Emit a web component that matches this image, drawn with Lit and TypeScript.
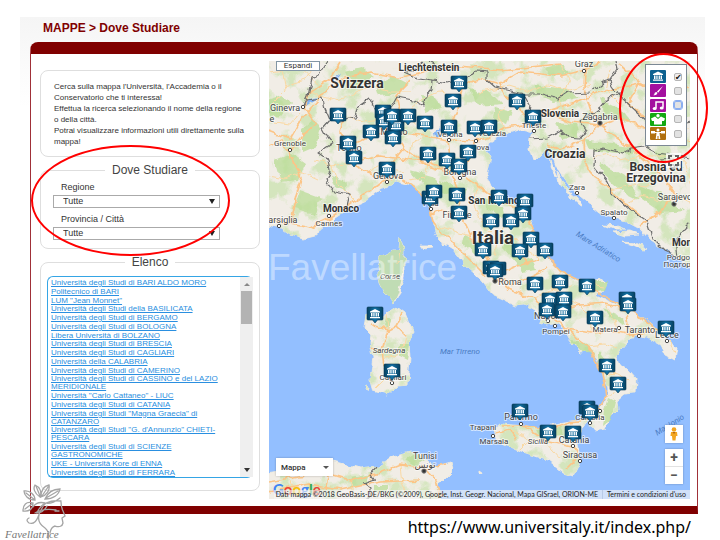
import { LitElement, html, svg, css } from "lit";
import { customElement } from "lit/decorators.js";

type Label = [text: string, x: number, y: number, cls: string];

const LAND = [
  // mainland
  "M260 50H700V272L690 267 678 258 665 250 650 240 640 229 625 221 612 216 600 213 586 201 575 192 565 180 556 166 552 155 548 146 543 150 538 158 534 162 530 150 531 140 533 132 520 129 508 133 498 135 489 141 487 150 491 158 489 166 487 176 491 186 498 193 507 200 520 207 528 213 532 222 534 232 538 245 545 256 553 264 562 271 570 277 580 281 590 281 602 279 607 283 603 291 597 296 606 300 618 305 632 311 645 322 658 332 668 340 677 348 675 360 665 355 660 345 646 337 634 335 625 346 617 356 620 365 629 370 636 378 635 393 625 394 617 401 618 410 610 418 604 429 594 431 590 425 597 415 606 400 608 390 603 378 601 370 597 358 590 352 580 353 573 345 568 338 562 327 555 324 546 325 540 318 535 311 525 305 515 306 503 300 492 295 483 283 476 275 465 265 453 250 442 243 437 238 434 226 432 215 428 202 422 193 410 185 395 181 380 190 368 200 350 208 335 218 325 228 315 236 303 239 290 235 280 228 260 223Z",
  // Corse
  "M400 238L403 243 405 263 405 277 400 292 394 301 385 293 380 283 377 267 380 257 393 250 399 250Z",
  // Sardegna
  "M397 307L405 313 413 332 409 343 410 357 408 384 398 385 387 395 373 391 370 380 373 357 370 343 371 334 364 327 366 315 377 320Z",
  // Sicilia
  "M493 431L502 423 513 424 523 425 538 428 563 422 580 420 590 418 585 427 575 438 577 450 581 460 573 476 563 473 547 460 523 452 507 445 495 440Z",
  // Tunisia
  "M260 474L285 470 333 462 360 469 377 467 393 457 410 452 427 457 433 467 451 462 453 470 440 483 437 490 442 510H260Z",
  // small islands and the Dalmatian archipelago
  "M421 246l10 0 1 3-8 1zM551 160l3 9 4 8-3-1-5-10zM558 172l6 11 7 9-3 0-8-10zM569 192l7 6 6 7-4-1-8-7zM603 225l14 1 8 3-12 0zM613 232l16-1 10 4-14 1zM622 242l14 1 12 6-4 1-12-5zM540 320l3 1-1 3-3-1zM366 385l2 1-1 3-2-1zM479 471l3 2-1 2-2-2z",
].join("");

const GREENS =
  "M269 100l14-6 8 10-10 12-12 2zM302 130l12-10 8 8-6 18-14 6zM275 160l16-6 14 10-6 16-18 2zM300 190l22 8-8 16-20-6zM330 175l14 4 2 12-12-4zM345 72l16-4 14 10-18 8zM375 84l18-8 16 8-14 10-16 2zM420 95l14 2 8 10-16 6zM470 88l22 6 10 10-24 2zM495 108l16 4-4 12-14-6zM535 84l30 4 14 10-24 4-18-8zM545 68l16-4 10 8-16 6zM600 98l20 10 14 16-28-6zM556 122l20 2 4 14-18 2zM585 140l26 4 26 4-8 6-40-4zM600 162l24 14 16 24-20-10-18-16zM640 185l24 10 20 16-22 2-20-14zM655 150l18 6 10 12-22-6zM410 170l22 6 12 12-20-2zM440 180l26 10-4 10-20-8zM478 195l24 12 4 16-18-14zM465 235l16 8-4 12-14-10zM505 240l16 16 12 12-14-2-16-18zM518 262l14-4 4 12-14 2zM596 281l12 0-3 9-10 1zM604 309l18 8 4 9-16-8zM570 340l16 2 8 12-14-2zM598 350l10 12-2 14-8-14zM608 398l8 4-4 16-10 8 2-16zM400 344l9 0-2 16-8-4zM386 318l6 2-4 9-4-2zM536 430l24-4 4 8-24 2zM352 477l18-4-4 12-16 2zM374 486l12 0 0 6-12 0zM406 460l10-6 10 6-10 6z";

const ROADS = [
  "M269 131L290 139 302 118 325 92 345 77 370 72 400 78 430 70 460 66 500 70 560 64",
  "M348 146L340 132 344 116M348 146L372 134 393 131 425 136 450 140 476 141 486 139M348 146L352 163 368 172 386 179",
  "M354 163L380 156 408 160 430 163 452 172 466 178 486 192 504 203 524 209 533 228 542 250 560 270 588 284 605 297 632 311 656 330",
  "M393 131L404 148 428 166 452 174 459 193 460 214 470 236 486 258 494 276 510 290 535 298 548 314 566 329 588 346 602 372 606 396 597 412",
  "M386 181L400 177 415 188 428 203 434 224 450 240 468 258 486 276",
  "M386 179L368 192 348 206 328 219 310 228 290 224 269 219M290 224L296 196 302 178 290 156 282 140 269 146",
  "M340 62L330 78 310 92 304 108 316 124 302 136 290 150M393 131L400 112 396 96 410 80",
  "M449 130L457 110 462 88 478 78 500 84M449 140L452 172M476 141L468 160 460 172",
  "M486 139L505 128 530 124 545 112 575 102 600 92 640 84 660 80M530 124L520 108 505 96 500 84 520 72 560 76 585 70 600 62",
  "M545 112L570 122 600 125 620 118 650 130 690 140M600 125L584 140 560 150 548 144M600 125L590 108 584 88 585 70",
  "M584 140L585 160 592 176 612 190 626 204 640 216M600 125L618 138 640 156 662 176 676 196 660 212 640 226",
  "M620 64L640 82 655 92 690 86M640 82L628 104 650 120",
  "M494 276L518 266 540 258M494 276L512 284 532 276 548 268M550 312L580 306 605 304 632 311M566 329L590 333 616 332 632 335 656 330",
  "M626 314L630 336M534 232L520 252 528 264M460 214L440 210 432 214M404 148L387 168",
  "M502 426L520 425 545 429 570 422 588 420M573 446L578 458 568 468M523 426L545 440 573 446M494 434L510 430 516 440",
  "M370 324L388 330 396 326 402 314M388 330L382 350 384 366 392 382M382 352L372 348M396 326L406 336",
  "M269 482L300 476 330 474 350 480 380 472 400 464 425 468 436 480 440 499M269 492L310 484 340 490 380 482 420 480M425 468L446 464M330 474L326 490",
];

const MINOR = [
  "M269 72L300 68 318 84M280 61L286 90 272 104M318 62L305 80 284 86M269 175L285 178 300 172 318 180M310 92L330 100 350 96 368 86 390 92 412 92",
  "M300 112L290 124 274 122M316 160L332 166 352 163M332 166L338 184 354 200M368 172L380 166 404 172M408 160L412 144 425 136",
  "M344 116L362 122 384 120M414 124L412 108 424 98 440 92 457 96M430 163L434 150M428 166L424 178 410 180M470 236L456 232 440 226",
  "M480 92L510 86 530 92 548 84 570 90 590 84M505 128L498 116 506 104M560 64L570 80 560 98 566 120M610 70L606 90 620 104",
  "M620 118L640 128 664 132 690 128M640 156L620 160 606 154 592 158M662 176L648 186 632 184 612 190M676 196L690 202M640 156L664 156 684 162 690 182M626 204L640 196 660 200",
  "M466 178L478 188 474 206 484 226 498 238 520 240M524 209L510 222 498 238 494 256M540 258L526 250 512 244M535 298L552 290 572 286M560 270L552 288 566 300 580 306M588 284L604 286",
  "M580 306L592 318 590 333M605 304L614 320 616 332M588 346L604 344 616 348M602 372L618 374 632 382M606 396L616 392",
  "M632 335L648 330M656 330L670 342 674 354M656 330L648 320 636 314M510 430L530 440 548 444 560 458M530 440L520 450M545 429L550 440",
  "M386 314L388 330M406 336L402 352 384 358M384 366L400 364M376 388L384 380M400 250L398 264",
  "M290 480L296 499M350 480L356 499M400 464L402 484 410 499M372 474L368 490M310 484L316 499",
];

const BORDERS = [
  "M328 61L320 74 312 78 308 96 303 107 306 100 323 98 325 108 330 120 323 128 328 137 333 143 318 153 328 160 330 170 326 180 335 192 349 195 346 208",
  "M330 120L340 121 355 118 360 105 370 98 377 113 388 113 397 97 413 100 423 106 425 98 432 90 433 80 447 83 467 78 477 71 487 72 487 80 495 87 523 94 540 94 558 99 567 93 590 92 603 82 610 80 617 70 615 61",
  "M424 61L417 68 405 72 418 78 433 80M428 61L436 66 430 72",
  "M610 80L612 86 618 94 607 100 600 108 592 114 580 122 586 130 580 139 568 138 560 131 547 138 530 139M524 95L530 106 528 116 536 126",
  "M618 94L637 112 648 122 672 126 690 122M690 158L680 156 657 153 645 147 630 149 623 153 603 148 595 150 594 166 607 182 613 194 630 210 647 222 652 238 667 253 677 257 675 240 683 230 690 223M661 160L684 158",
  "M377 466L370 474 374 480 363 484 370 490 369 499M432 490l-2 9",
];

const TOWNS: [number, number][] = [
  [303, 107], [290, 150], [387, 182], [449, 140], [476, 141], [460, 178], [431, 209], [329, 216], [279, 226],
  [584, 71], [577, 193], [614, 218], [548, 321], [555, 326], [619, 328], [639, 336], [667, 341],
  [493, 436], [521, 424], [590, 423], [573, 446], [580, 461], [392, 383], [534, 131], [600, 411],
];
const CAPITALS: [number, number][] = [[600, 123], [674, 204], [495, 281], [424, 471]];

const PINS: [number, number][] = [
  [459, 83], [453, 101], [338, 115], [383, 112], [384, 121], [396, 125], [392, 116], [408, 116], [393, 138],
  [371, 132], [425, 123], [449, 127], [475, 128], [489, 127], [348, 143], [354, 158], [428, 154], [447, 160],
  [459, 166], [468, 152], [387, 169], [430, 198], [434, 192], [457, 195], [459, 213], [517, 101], [533, 117],
  [499, 197], [525, 201], [523, 214], [491, 221], [511, 221], [531, 239], [520, 251], [545, 250], [483, 250],
  [491, 268], [498, 269], [495, 271], [535, 284], [560, 282], [587, 286], [550, 300], [564, 299], [547, 310],
  [563, 312], [595, 318], [627, 299], [628, 305], [666, 328], [607, 366], [618, 384], [520, 411], [587, 408],
  [590, 412], [548, 432], [573, 433], [375, 314], [392, 371],
];

const LABELS: Label[] = [
  ["Svizzera", 357, 88, "country"], ["Liechtenstein", 429, 71, "small-b"], ["Graz", 584, 67, "city"],
  ["Ginevra", 285, 111, "city"], ["e", 272, 122, "city"], ["Grenoble", 290, 146, "town"],
  ["Torino", 349, 151, "city"], ["Milano", 394, 135, "city"], ["Verona", 450, 137, "town"],
  ["Venezia", 492, 136, "town"], ["Padova", 476, 150, "town"], ["Trieste", 534, 128, "town"],
  ["Slovenia", 560, 117, "small-b"], ["Zagabria", 600, 120, "city"], ["Croazia", 565, 158, "mid"],
  ["Bosnia ed", 656, 171, "mid"], ["Erzegovina", 656, 182, "mid"], ["Sarajevo", 675, 200, "city"],
  ["Genova", 388, 179, "city"], ["Bologna", 460, 175, "city"], ["Monaco", 341, 212, "small-b"],
  ["Marsiglia", 279, 223, "city"], ["Cannes", 329, 226, "town"], ["Pisa", 431, 206, "town"],
  ["Firenze", 457, 218, "city"], ["San Marino", 494, 204, "small-b"], ["Zara", 577, 190, "town"],
  ["Spalato", 614, 215, "town"], ["Italia", 493, 244, "big"], ["Roma", 510, 285, "city"],
  ["Mon", 682, 246, "small-b"], ["Podgorica", 685, 260, "town"], ["Подгорица", 684, 267, "town"],
  ["Napoli", 547, 319, "city"], ["Pompei", 556, 334, "town"], ["Matera", 605, 332, "town"],
  ["Taranto", 640, 333, "city"], ["Lecce", 667, 338, "city"], ["Corse", 390, 279, "isle"],
  ["Sardegna", 389, 353, "isle"], ["Cagliari", 393, 380, "town"], ["Mar Tirreno", 460, 354, "water"],
  ["Tunisi", 425, 459, "city"], ["تونس", 425, 468, "arabic"], ["Trapani", 483, 430, "town"],
  ["Marsala", 494, 444, "town"], ["Palermo", 521, 420, "city"], ["Sicilia", 538, 444, "isle"],
  ["Catania", 574, 443, "city"], ["Calabria", 590, 420, "town"], ["Siracusa", 580, 458, "city"],
];

const temple = svg`<path d="M-5 -2.4L0 -5 5 -2.4V-1.6H-5zM-4 -1h1.5v3.6h-1.5zM-1.7 -1h1.3v3.6h-1.3zM.6 -1h1.3v3.6h-1.3zM2.6 -1h1.4v3.6h-1.4zM-5 3h10v1.2h-10z" fill="#fff"/>`;

@customElement("study-map")
export class StudyMap extends LitElement {
  static styles = css`
    :host { display: block; position: relative; aspect-ratio: 421 / 438; overflow: hidden; background: #93bfff; font-family: Roboto, "Noto Sans", sans-serif; color: #333; }
    .canvas { display: block; width: 100%; height: 100%; }
    button { font: inherit; color: inherit; padding: 0; margin: 0; border: 0; background: #fff; }
    text { text-anchor: middle; paint-order: stroke; stroke: #fff; stroke-opacity: .6; stroke-width: 2px; stroke-linejoin: round; fill: #444; font-size: 9px; }
    text.town { font-size: 8px; }
    text.arabic { font: 9px "DejaVu Sans", sans-serif; }
    text.country { font-size: 14px; font-weight: 700; fill: #333; }
    text.mid { font-size: 12px; font-weight: 700; fill: #333; }
    text.small-b { font-size: 10px; font-weight: 700; fill: #333; }
    text.big { font-size: 19px; font-weight: 700; fill: #333; }
    text.isle { font-size: 8px; font-style: italic; }
    text.water { font-size: 8px; font-style: italic; fill: #4a7cc4; stroke: none; }
    text.mark { font-family: "Liberation Sans", Arial, sans-serif; font-size: 37px; fill: #fff; fill-opacity: .42; stroke: none; text-anchor: start; }
    .expand { position: absolute; left: 7px; top: 0; width: 44px; height: 10px; border: 1px solid #8296a5; font-size: 8px; line-height: 8px; }
    .legend { position: absolute; right: 3px; top: 3px; width: 42px; height: 82px; box-sizing: border-box; border: 1px solid #7c8894; background: #fff; padding: 5px 4px; display: flex; flex-direction: column; justify-content: space-between; }
    .legend label { display: flex; justify-content: space-between; align-items: center; }
    .legend svg { width: 16px; height: 13px; display: block; }
    input { appearance: none; margin: 0; width: 8px; height: 8px; border: 1px solid #b5b5b5; border-radius: 2px; background: #e2e2e2; display: grid; place-items: center; }
    input:checked { background: #eee; }
    input:checked::before { content: "✔"; font: 8px/8px "DejaVu Sans", sans-serif; color: #111; }
    input.focused { outline: 1px solid #8aaef0; border-color: #8aaef0; }
    .full { position: absolute; right: 9px; top: 92px; width: 15px; height: 15px; background: #ffffffc0; }
    .full svg { display: block; }
    .type { position: absolute; left: 7px; bottom: 23px; width: 57px; height: 18px; display: flex; align-items: center; justify-content: space-between; padding: 0 4px 0 5px; box-sizing: border-box; font-size: 8px; font-weight: 500; box-shadow: 0 0 2px #0004; }
    .type i { border: 3px solid transparent; border-top-color: #555; border-bottom: 0; }
    .side { position: absolute; right: 7px; bottom: 15px; width: 18px; display: flex; flex-direction: column; gap: 6px; }
    .side button, .zoom { box-shadow: 0 0 2px #0004; }
    .peg { height: 18px; display: grid; place-items: center; }
    .zoom { background: #fff; display: flex; flex-direction: column; }
    .zoom button { box-shadow: none; height: 17px; font-size: 14px; line-height: 17px; font-weight: 700; color: #555; }
    .zoom button + button { border-top: 1px solid #e2e2e2; height: 18px; }
    .brand { position: absolute; left: 4px; bottom: 2px; font: 700 15px/15px Lato, sans-serif; }
    .credits { position: absolute; right: 0; bottom: 0; height: 9px; display: flex; background: #f5f5f5a0; font: 7px/9px Lato, sans-serif; white-space: nowrap; color: #222; }
    .credits span { padding: 0 4px 0 2px; }
    .credits a { color: inherit; text-decoration: none; padding: 0 4px; border-left: 1px solid #b8cbe6; }
    .b { color: #4285f4; } .r { color: #ea4335; } .y { color: #fbbc05; } .g { color: #34a853; }
  `;

  render() {
    return html`
      <svg class="canvas" viewBox="269 61 421 438" preserveAspectRatio="xMidYMid slice" role="img" aria-label="Italia">
        <defs>
          <filter id="rough" x="0" y="0" width="1" height="1" color-interpolation-filters="sRGB">
            <feTurbulence type="fractalNoise" baseFrequency=".11" numOctaves="2" seed="4" result="n" />
            <feDisplacementMap in="SourceGraphic" in2="n" scale="7" xChannelSelector="R" yChannelSelector="G" />
          </filter>
          <filter id="relief" x="0" y="0" width="1" height="1" color-interpolation-filters="sRGB">
            <feTurbulence type="fractalNoise" baseFrequency=".05" numOctaves="4" seed="9" />
            <feColorMatrix values="0 0 0 0 .76  0 0 0 0 .88  0 0 0 0 .64  6 0 0 0 -3" />
            <feComposite in2="SourceGraphic" operator="in" />
          </filter>
          <linearGradient id="pinfill" x1="0" x2="1">
            <stop offset="0" stop-color="#07405f" /><stop offset=".5" stop-color="#1272a6" /><stop offset="1" stop-color="#07405f" />
          </linearGradient>
          <g id="pin">
            <path d="M-7 -7H7Q8 -7 8 -6V5Q8 6 7 6H2.500L0 9-2.500 6H-7Q-8 6-8 5V-6Q-8 -7-7 -7Z" fill="url(#pinfill)" stroke="#063b58" stroke-width=".6" />
            ${temple}
          </g>
        </defs>
        <g filter="url(#rough)">
          <rect x="250" y="40" width="460" height="480" fill="#93bfff" />
          <path d=${LAND} fill="#f1ede6" stroke="#f6edda" stroke-width=".8" />
          <path d=${LAND} filter="url(#relief)" opacity=".6" />
          <path d=${GREENS} fill="#b9dc97" opacity=".75" />
          <path d="M400 238L403 243 405 263 402 277 398 292 394 301 385 293 380 283 377 267 380 257 393 250 399 250Z" fill="#c0dcb4" />
          <path d="M304 103q8-7 18-5-9 1-16 7zM435 133l3-7 1 8-2 6zM333 78l8-5-5 7z" fill="#7fb1f5" />
          ${MINOR.map((d) => svg`<path d=${d} fill="none" stroke="#fad9a4" stroke-width="1"/>`)}
          ${ROADS.map((d) => svg`<path d=${d} fill="none" stroke="#fcc587" stroke-width="1.700" stroke-linejoin="round"/>`)}
          ${BORDERS.map((d) => svg`<path d=${d} fill="none" stroke="#6d6d6d" stroke-width="1.200" stroke-linejoin="round"/>`)}
        </g>
        ${TOWNS.map(([x, y]) => svg`<circle cx=${x} cy=${y} r="1.700" fill="#fff" stroke="#444" stroke-width="1"/>`)}
        ${CAPITALS.map(([x, y]) => svg`<circle cx=${x} cy=${y} r="2.200" fill="#333" stroke="#777" stroke-width="1"/>`)}
        ${LABELS.map(([t, x, y, c]) => svg`<text class=${c} x=${x} y=${y}>${t}</text>`)}
        <text class="water" transform="translate(597 249) rotate(32)">Mare Adriatico</text>
        <text class="water" transform="translate(671 427) rotate(-32)">Mar Ionio</text>
        ${PINS.map(([x, y]) => svg`<use href="#pin" x=${x} y=${y}/>`)}
        <text class="mark" x="268" y="280">Favellatrice</text>
      </svg>
      <button class="expand">Espandi</button>
      <button class="full" aria-label="Schermo intero">
        <svg width="15" height="15" viewBox="0 0 15 15" fill="none" stroke="#666" stroke-width="2"><path d="M3 6V3h3M9 3h3v3M12 9v3H9M6 12H3V9" /></svg>
      </button>
      <div class="legend">
        <label>
          <svg viewBox="-8 -6.500 16 13"><rect x="-8" y="-6.500" width="16" height="13" rx="1" fill="#0d6190" />${temple}</svg>
          <input type="checkbox" aria-label="Università" checked />
        </label>
        <label>
          <svg viewBox="0 0 16 13"><rect width="16" height="13" rx="1" fill="#a3109f" /><path d="M13 2L7 7.500 8.200 8.700zM6.500 8q-2 0-2 1.500T3 11q3.500 1 4.500-2z" fill="#fff" /></svg>
          <input type="checkbox" aria-label="Accademia" />
        </label>
        <label>
          <svg viewBox="0 0 16 13"><rect width="16" height="13" rx="1" fill="#a3109f" /><path d="M6 9V3h7v5.500" fill="none" stroke="#fff" stroke-width="1.500" /><ellipse cx="4.700" cy="9.500" rx="2" ry="1.500" fill="#fff" /><ellipse cx="11.700" cy="9" rx="2" ry="1.500" fill="#fff" /></svg>
          <input class="focused" type="checkbox" aria-label="Conservatorio" />
        </label>
        <label>
          <svg viewBox="0 0 16 13"><rect width="16" height="13" rx="1" fill="#12a812" /><circle cx="8" cy="2.800" r="1.700" fill="#fff" /><path d="M1 5.500L5 3.500 8 6 11 3.500l4 2-1 2.500H12V11.500H4V8H2z" fill="#fff" /></svg>
          <input type="checkbox" aria-label="Studenti" />
        </label>
        <label>
          <svg viewBox="0 0 16 13"><rect width="16" height="13" rx="1" fill="#b1700f" /><circle cx="8" cy="3" r="1.500" fill="#fff" /><path d="M1 4h4v2.500H1zM11 4h4v2.500h-4zM5 5h6v1H5zM6.500 6h3l.8 6H8.500V9h-1v3H5.700z" fill="#fff" /></svg>
          <input type="checkbox" aria-label="Servizi" />
        </label>
      </div>
      <button class="type">Mappa<i></i></button>
      <div class="side">
        <button class="peg" aria-label="Street View">
          <svg width="8" height="14" viewBox="0 0 8 14"><circle cx="4" cy="2.500" r="2.300" fill="#f3a621" /><path d="M1 5h6l.5 4H6l-.5 4.500h-3L2 9H.5z" fill="#f3a621" /><path d="M2.500 5h3L4 7z" fill="#b5650d" /></svg>
        </button>
        <div class="zoom"><button aria-label="Zoom avanti">+</button><button aria-label="Zoom indietro">−</button></div>
      </div>
      <div class="brand" aria-label="Google"><span class="b">G</span><span class="r">o</span><span class="y">o</span><span class="b">g</span><span class="g">l</span><span class="r">e</span></div>
      <div class="credits"><span>Dati mappa ©2018 GeoBasis-DE/BKG (©2009), Google, Inst. Geogr. Nacional, Mapa GISrael, ORION-ME</span><a href="#">Termini e condizioni d'uso</a></div>
    `;
  }
}

const UNIVERSITIES = [
  "Università degli Studi di BARI ALDO MORO", "Politecnico di BARI", 'LUM "Jean Monnet"',
  "Università degli Studi della BASILICATA", "Università degli Studi di BERGAMO", "Università degli Studi di BOLOGNA",
  "Libera Università di BOLZANO", "Università degli Studi di BRESCIA", "Università degli Studi di CAGLIARI",
  "Università della CALABRIA", "Università degli Studi di CAMERINO", "Università degli Studi di CASSINO e del LAZIO MERIDIONALE",
  'Università "Carlo Cattaneo" - LIUC', "Università degli Studi di CATANIA", 'Università degli Studi "Magna Graecia" di CATANZARO',
  "Università degli Studi \"G. d'Annunzio\" CHIETI-PESCARA", "Università degli Studi di SCIENZE GASTRONOMICHE",
  "UKE - Università Kore di ENNA", "Università degli Studi di FERRARA",
];

@customElement("app-root")
export class AppRoot extends LitElement {
  static styles = css`
    :host { display: block; position: relative; min-height: 100vh; box-sizing: border-box; padding: 17px 15px 0 20px; background: #fff; overflow: hidden; font-family: "Liberation Sans", Arial, sans-serif; color: #333; }
    .page { background: linear-gradient(#f5f5f5, #fff 90px); padding: 0 7px 0 10px; }
    h1 { margin: 0; padding: 3px 13px 6px; font-size: 12px; line-height: 16px; color: #800000; }
    .frame { background: #fff; border: 1px solid #a03038; border-top: 12px solid #800000; border-bottom: 8px solid #800000; border-radius: 8px 8px 0 0; padding: 7px 7px 7px 9px; display: grid; grid-template-columns: 220px 1fr; gap: 9px; align-items: start; }
    .side { display: flex; flex-direction: column; gap: 6px; padding-top: 9px; }
    .intro, fieldset { box-sizing: border-box; border: 1px solid #dedede; border-radius: 8px; margin: 0; min-width: 0; }
    .intro { padding: 10px 13px 9px; font-size: 8px; line-height: 11px; }
    p { margin: 0; }
    legend { margin: 0 auto; padding: 0 7px; font-size: 12px; line-height: 14px; color: #444; }
    .group { position: relative; }
    .filters { padding: 5px 12px 8px; }
    .fields { display: flex; flex-direction: column; width: 167px; }
    .fields label { font-size: 9px; line-height: 11px; padding: 0 8px 2px; }
    .pick { display: grid; align-items: center; }
    .pick + label { margin-top: 6px; }
    select, .arrow { grid-area: 1 / 1; }
    select { appearance: none; margin: 0; height: 13px; width: 100%; border: 1px solid #aaa; border-radius: 0; background: #fff; padding: 0 9px; font: 9px/11px "Liberation Sans", Arial, sans-serif; color: #333; }
    .arrow { justify-self: end; margin-right: 5px; border: 3px solid transparent; border-top: 5px solid #222; border-bottom: 0; pointer-events: none; }
    .ring { position: absolute; border: 2px solid #f00; border-radius: 50%; box-sizing: border-box; pointer-events: none; }
    .ring.form { left: -9px; top: -18px; width: 199px; height: 111px; z-index: 1; }
    .ring.key { right: -18px; top: -8px; width: 89px; height: 110px; }
    .results { padding: 7px 6px 12px; }
    .box { display: flex; height: 202px; box-sizing: border-box; border: 1px solid #35a5e5; border-right: 0; border-radius: 6px; }
    ul { flex: 1; margin: 0; padding: 2px 0 0 3px; list-style: none; display: flex; flex-direction: column; justify-content: space-between; }
    li { font-size: 8px; line-height: 8px; max-width: 182px; }
    li a { color: #2a8fe0; text-decoration: underline; }
    .bar { width: 13px; background: #efefef; display: flex; flex-direction: column; align-items: center; }
    .bar .up { margin: 6px 0 5px; border: 3px solid transparent; border-bottom-color: #888; border-top: 0; }
    .bar .thumb { width: 11px; height: 33px; background: #b3b3b3; }
    .bar .down { margin-top: auto; margin-bottom: 5px; border: 3px solid transparent; border-top: 4px solid #333; border-bottom: 0; }
    .map { position: relative; }
    .url { padding: 1px 7px; text-align: right; font: 16px/24px "Noto Sans", sans-serif; color: #000; }
    .logo { position: absolute; left: 0; top: 480px; width: 72px; height: 60px; }
    .logo text { font: italic 11px "Liberation Serif", serif; fill: #777; }
  `;

  private picker(id: string, label: string) {
    return html`<label for=${id}>${label}</label>
      <span class="pick"><select id=${id}><option>Tutte</option></select><span class="arrow"></span></span>`;
  }

  render() {
    return html`
      <main class="page">
        <h1>MAPPE &gt; Dove Studiare</h1>
        <div class="frame">
          <div class="side">
            <div class="intro">
              <p>Cerca sulla mappa l'Università, l'Accademia o il Conservatorio che ti interessa!</p>
              <p>Effettua la ricerca selezionando il nome della regione o della città.</p>
              <p>Potrai visualizzare informazioni utili direttamente sulla mappa!</p>
            </div>
            <div class="group">
              <fieldset class="filters">
                <legend>Dove Studiare</legend>
                <div class="fields">
                  ${this.picker("regione", "Regione")}
                  ${this.picker("provincia", "Provincia / Città")}
                </div>
              </fieldset>
              <span class="ring form"></span>
            </div>
            <fieldset class="results">
              <legend>Elenco</legend>
              <div class="box">
                <ul>${UNIVERSITIES.map((u) => html`<li><a href="#">${u}</a></li>`)}</ul>
                <div class="bar"><span class="up"></span><span class="thumb"></span><span class="down"></span></div>
              </div>
            </fieldset>
          </div>
          <div class="map"><study-map></study-map><span class="ring key"></span></div>
        </div>
        <p class="url">https://www.universitaly.it/index.php/</p>
      </main>
      <svg class="logo" viewBox="0 480 72 60" fill="none" stroke="#a5a5a5" stroke-width="1.300" stroke-linecap="round">
        <path d="M40 497C34 493 33 488 35 485 40 487 42 492 40 497ZM41 497C41 490 44 486 49 485 50 490 47 495 41 497ZM45 499C48 492 54 489 60 489 59 495 53 499 45 499ZM35 500C28 500 24 495 24 491 30 490 35 495 35 500ZM33 503C26 501 23 505 23 511 29 512 33 509 33 503ZM36 486l4 10M48 487l-6 9M58 491l-12 7M26 493l9 7M25 509l8-6" />
        <path d="M29 518q-4 2 0 5 6 2 9-6 4-11 8-14 7-3 15-2M33 507q4-6 12-4 6 2 15-5M35 513q8-5 21-3M45 503q-6 4-8 10 6 0 10-7M61 502q0 5 2 9l2 5-3 2 1 5q-1 5-8 3-4 1-5 7M39 515q-2 8 6 13 5 4 3 11M55 511l4 0" />
        <text x="5" y="538" stroke="none">Favellatrice</text>
      </svg>
    `;
  }
}
